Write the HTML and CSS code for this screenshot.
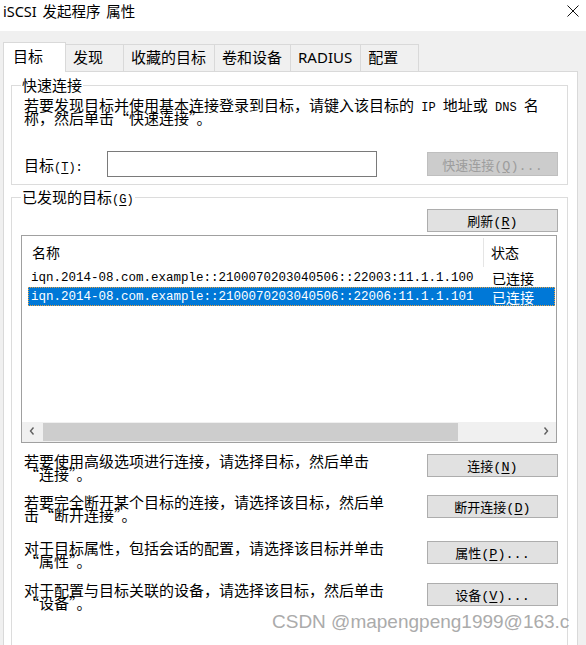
FILE: index.html
```html
<!DOCTYPE html>
<html lang="zh-CN">
<head>
  <meta charset="UTF-8" />
  <meta name="viewport" content="width=device-width, initial-scale=1.0"/>
  <title>iSCSI 发起程序 属性</title>
  <link rel="stylesheet" href="styles.css">
</head>
<body>
  <div class="titlebar">
    <span class="title">iSCSI 发起程序 属性</span>
    <span class="close">
      <svg width="12" height="12" viewBox="0 0 12 12"><path d="M0.5 0.5 L11.5 11.5 M11.5 0.5 L0.5 11.5" stroke="#111" stroke-width="1"/></svg>
    </span>
  </div>

  <div class="tabs">
    <div class="tab active">目标</div>
    <div class="tab">发现</div>
    <div class="tab">收藏的目标</div>
    <div class="tab">卷和设备</div>
    <div class="tab">RADIUS</div>
    <div class="tab">配置</div>
  </div>

  <div class="panel">
    <fieldset class="group quick">
      <legend>快速连接</legend>
      <p>若要发现目标并使用基本连接登录到目标，请键入该目标的<span class="mono"> IP </span>地址或<span class="mono"> DNS </span>名<br>称，然后单击“快速连接”。</p>
      <div class="target-row">
        <label for="target">目标<span class="mono">(<u>T</u>):</span></label>
        <input type="text" id="target" />
        <button disabled>快速连接<span class="key">(<u>Q</u>)...</span></button>
      </div>
    </fieldset>

    <fieldset class="group found">
      <legend>已发现的目标<span class="mono">(<u>G</u>)</span></legend>
      <div class="refresh-row">
        <button>刷新<span class="key">(<u>R</u>)</span></button>
      </div>

      <div class="listview">
        <div class="lv-head">
          <div class="col-name">名称</div>
          <div class="col-state">状态</div>
        </div>
        <div class="lv-row">
          <div class="col-name">iqn.2014-08.com.example::2100070203040506::22003:11.1.1.100</div>
          <div class="col-state">已连接</div>
        </div>
        <div class="lv-row selected">
          <div class="col-name">iqn.2014-08.com.example::2100070203040506::22006:11.1.1.101</div>
          <div class="col-state">已连接</div>
        </div>
        <div class="lv-fill"></div>
        <div class="hscroll">
          <span class="arrow">
            <svg width="6" height="8" viewBox="0 0 6 8"><path d="M4.5 0.5 L1.5 4 L4.5 7.5" fill="none" stroke="#606060" stroke-width="1.4"/></svg>
          </span>
          <div class="track"><div class="thumb"></div></div>
          <span class="arrow">
            <svg width="6" height="8" viewBox="0 0 6 8"><path d="M1.5 0.5 L4.5 4 L1.5 7.5" fill="none" stroke="#606060" stroke-width="1.4"/></svg>
          </span>
        </div>
      </div>

      <div class="action">
        <p>若要使用高级选项进行连接，请选择目标，然后单击<br>“连接”。</p>
        <button>连接<span class="key">(<u>N</u>)</span></button>
      </div>
      <div class="action">
        <p>若要完全断开某个目标的连接，请选择该目标，然后单<br>击“断开连接”。</p>
        <button>断开连接<span class="key">(<u>D</u>)</span></button>
      </div>
      <div class="action">
        <p>对于目标属性，包括会话的配置，请选择该目标并单击<br>“属性”。</p>
        <button>属性<span class="key">(<u>P</u>)...</span></button>
      </div>
      <div class="action">
        <p>对于配置与目标关联的设备，请选择该目标，然后单击<br>“设备”。</p>
        <button>设备<span class="key">(<u>V</u>)...</span></button>
      </div>
    </fieldset>
  </div>

  <div class="watermark">CSDN @mapengpeng1999@163.c</div>
</body>
</html>
```

FILE: styles.css
```css
html,
body {
  margin: 0;
  padding: 0;
}

body {
  position: relative;
  height: 645px;
  overflow: hidden;
  background: #f0f0f0;
  font-family: "Noto Sans CJK SC", sans-serif;
  font-size: 15px;
  color: #000;
}

/* window title */
.titlebar {
  height: 31px;
  background: #fff;
  display: flex;
  justify-content: space-between;
  align-items: flex-start;
}

.title {
  margin-left: 3px;
  font-family: "Noto Sans", "Noto Sans CJK SC", sans-serif;
  font-size: 14.5px;
  line-height: 22px;
  word-spacing: 2px;
}

.close {
  display: flex;
  margin: 5px 7px 0 0;
}

/* tabs */
.tabs {
  display: flex;
  align-items: flex-end;
  margin: 11px 0 0 3px;
  font-family: "Noto Sans", "Noto Sans CJK SC", sans-serif;
  font-size: 15px;
}

.tab {
  box-sizing: border-box;
  height: 27px;
  min-width: 58px;
  padding: 0 8px 2px 7px;
  display: flex;
  align-items: center;
  background: #f0f0f0;
  border: 1px solid #d9d9d9;
  border-left: none;
  border-bottom: none;
  line-height: 1;
}

.tab.active {
  position: relative;
  z-index: 1;
  height: 30px;
  min-width: 63px;
  padding: 0 9px 3px 9px;
  margin-bottom: -1px;
  background: #fff;
  border-left: 1px solid #d9d9d9;
}

/* tab page */
.panel {
  box-sizing: border-box;
  width: 575px;
  height: 600px;
  margin-left: 3px;
  padding: 4px 9px 0 7px;
  background: #fff;
  border: 1px solid #d9d9d9;
}

.group {
  min-width: 0;
  margin: 0;
  padding: 0 9px 7px 12px;
  border: 1px solid #dcdcdc;
}

.group legend {
  padding: 0 1px;
  margin-left: -3px;
  line-height: 18px;
}

.group p {
  margin: 0;
  line-height: 13px;
}

.mono {
  font-family: "Liberation Mono", monospace;
  font-size: 12px;
  line-height: 0;
}

.quick p {
  margin-top: 4px;
}

.target-row {
  display: flex;
  align-items: center;
  height: 26px;
  margin-top: 27px;
}

.target-row label {
  width: 83px;
}

.target-row input {
  box-sizing: border-box;
  width: 270px;
  height: 26px;
  margin: 0;
  padding: 0 4px;
  border: 1px solid #7a7a7a;
}

.target-row button {
  height: 24px;
  margin-left: auto;
}

/* buttons */
button {
  box-sizing: border-box;
  width: 131px;
  height: 23px;
  margin: 0;
  padding: 0;
  background: #e1e1e1;
  border: 1px solid #adadad;
  font-family: "Noto Sans CJK SC", sans-serif;
  font-size: 13px;
  line-height: 21px;
  color: #000;
}

button:disabled {
  background: #cccccc;
  border-color: #bfbfbf;
  color: #9d9d9d;
}

.key {
  font-family: "Liberation Mono", monospace;
  font-size: 13.5px;
  line-height: 0;
}

u {
  text-underline-offset: 2px;
}

.found {
  height: 470px;
  margin-top: 3px;
}

.refresh-row {
  display: flex;
  justify-content: flex-end;
  margin-top: 3px;
}

/* list view */
.listview {
  box-sizing: border-box;
  height: 208px;
  margin: 3px 1px 0 -3px;
  display: flex;
  flex-direction: column;
  border: 1px solid #a0a0a0;
  background: #fff;
}

.lv-head {
  display: flex;
  padding: 2px 0 1px;
  font-size: 14px;
}

.lv-head .col-name {
  box-sizing: border-box;
  width: 462px;
  height: 29px;
  padding: 0 0 0 10px;
  line-height: 29px;
  border-right: 1px solid #e5e5e5;
}

.lv-head .col-state {
  padding-left: 7px;
  line-height: 29px;
}

.lv-row {
  display: flex;
  height: 19px;
  margin: 0 1px 0 6px;
  align-items: center;
}

.lv-row .col-name {
  width: 456px;
  padding-left: 3px;
  box-sizing: border-box;
  font-family: "Liberation Mono", monospace;
  font-size: 12.5px;
  white-space: nowrap;
}

.lv-row .col-state {
  padding-left: 8px;
  font-size: 14px;
  white-space: nowrap;
}

.lv-row.selected {
  background: #0078d7;
  color: #fff;
  outline: 1px dotted #e8a040;
  outline-offset: -1px;
}

.lv-fill {
  flex: 1;
}

.hscroll {
  display: flex;
  height: 20px;
  background: #f0f0f0;
}

.hscroll .arrow {
  width: 20px;
  display: flex;
  align-items: center;
  justify-content: center;
  padding-bottom: 3px;
  box-sizing: border-box;
}

.track {
  flex: 1;
  padding: 1px 0 1px 1px;
}

.thumb {
  width: 415px;
  height: 100%;
  background: #cdcdcd;
}

/* bottom actions */
.action {
  display: flex;
  align-items: flex-start;
  height: 26px;
}

.action:nth-child(4) {
  margin-top: 11px;
}

.action:nth-child(5) {
  margin-top: 15px;
}

.action:nth-child(6) {
  margin-top: 20px;
}

.action:nth-child(7) {
  margin-top: 16px;
}

.action button {
  margin-left: auto;
}

.watermark {
  position: absolute;
  left: 272px;
  top: 612px;
  font-family: "Liberation Sans", sans-serif;
  font-size: 19px;
  line-height: 19px;
  color: #ababab;
  white-space: nowrap;
}
```
